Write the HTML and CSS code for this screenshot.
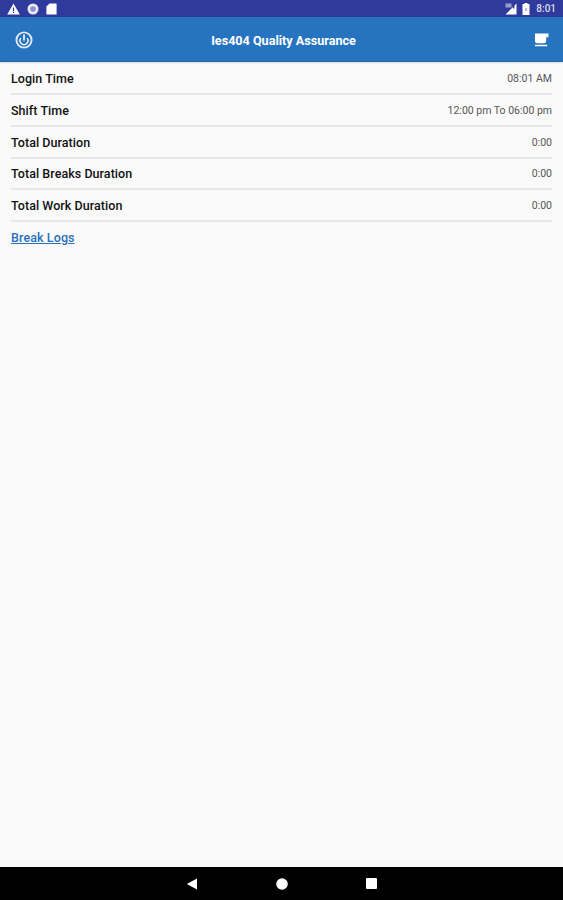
FILE: index.html
```html
<!DOCTYPE html>
<html lang="en">
<head>
    <meta charset="UTF-8">
    <meta name="viewport" content="width=device-width, initial-scale=1.0">
    <title>Ies404 Quality Assurance</title>
    <link rel="stylesheet" href="styles.css">
</head>
<body>
    <div class="status-bar">
        <div class="status-left">
            <svg width="13" height="12" viewBox="0 0 13 12"><path d="M6.5 0.5 L12.8 11.5 H0.2 Z" fill="#fff"/><rect x="5.9" y="4.5" width="1.2" height="3.6" fill="#303a9c"/><rect x="5.9" y="8.8" width="1.2" height="1.2" fill="#303a9c"/></svg>
            <svg width="12" height="12" viewBox="0 0 12 12"><circle cx="6" cy="6" r="5.5" fill="#e8e8f6"/><circle cx="6" cy="6" r="2.8" fill="#8f8fd0"/></svg>
            <svg width="11" height="12" viewBox="0 0 11 12"><path d="M3.5 0.5 H10 a0.6 0.6 0 0 1 0.6 0.6 V11 a0.6 0.6 0 0 1 -0.6 0.6 H1 a0.6 0.6 0 0 1 -0.6 -0.6 V3.5 Z" fill="#fff"/></svg>
        </div>
        <div class="status-right">
            <svg width="12" height="12" viewBox="0 0 12 12"><path d="M11.5 0.5 V11.5 H0.5 Z" fill="#fff"/><rect x="0.5" y="0.5" width="6" height="4" fill="#9a9ccc"/><rect x="8" y="0.5" width="1.4" height="5" fill="#303a9c"/></svg>
            <svg width="8" height="12" viewBox="0 0 8 12"><path d="M2.5 0 H5.5 V1 H7.5 V12 H0.5 V1 H2.5 Z" fill="#fff"/><rect x="3.4" y="5" width="1.2" height="3" fill="#8f8fd0"/></svg>
            <span class="clock">8:01</span>
        </div>
    </div>

    <header class="app-bar">
        <svg class="bar-icon" width="18" height="18" viewBox="0 0 18 18"><circle cx="9" cy="9" r="7.6" fill="none" stroke="#dfe9f6" stroke-width="1.9"/><path d="M5.8 7.2 A4 4 0 1 0 12.2 7.2" fill="none" stroke="#fff" stroke-width="1.4"/><rect x="8.2" y="3.6" width="1.6" height="6" fill="#fff"/></svg>
        <h1>Ies404 Quality Assurance</h1>
        <svg class="bar-icon" width="15" height="14" viewBox="0 0 16 15"><path d="M1 0.5 H15.5 V4.5 H13 V8.5 a2.5 2.5 0 0 1 -2.5 2.5 H3.5 A2.5 2.5 0 0 1 1 8.5 Z" fill="#fff"/><rect x="1" y="12.6" width="13" height="1.6" fill="#fff"/></svg>
    </header>

    <main class="content">
        <div class="row"><span class="label">Login Time</span><span class="value">08:01 AM</span></div>
        <div class="row"><span class="label">Shift Time</span><span class="value">12:00 pm To 06:00 pm</span></div>
        <div class="row"><span class="label">Total Duration</span><span class="value">0:00</span></div>
        <div class="row"><span class="label">Total Breaks Duration</span><span class="value">0:00</span></div>
        <div class="row"><span class="label">Total Work Duration</span><span class="value">0:00</span></div>
        <a class="break-link" href="#">Break Logs</a>
    </main>

    <nav class="nav-bar">
        <svg width="12" height="12" viewBox="0 0 12 12"><path d="M11 0.5 V11.5 L0.8 6 Z" fill="#fff"/></svg>
        <svg width="12" height="12" viewBox="0 0 12 12"><circle cx="6" cy="6" r="5.8" fill="#fff"/></svg>
        <svg width="11" height="11" viewBox="0 0 11 11"><rect width="11" height="11" rx="1" fill="#fff"/></svg>
    </nav>
</body>
</html>
```

FILE: styles.css
```css
html, body {
    height: 100%;
}

body {
    margin: 0;
    display: flex;
    flex-direction: column;
    font-family: Roboto, "Liberation Sans", sans-serif;
    background-color: #fafafa;
}

.status-bar {
    height: 17px;
    padding: 0 7px;
    display: flex;
    align-items: center;
    justify-content: space-between;
    background-color: #303a9c;
    color: #fff;
}

.status-left, .status-right {
    display: flex;
    align-items: center;
}

.status-left {
    gap: 7px;
}

.status-right {
    gap: 5px;
}

.clock {
    font-size: 10px;
    font-weight: 500;
    margin-left: 1px;
    color: #dcdcf0;
}

.app-bar {
    height: 45px;
    padding: 2px 14px 0 15px;
    box-sizing: border-box;
    display: flex;
    align-items: center;
    justify-content: space-between;
    background-color: #2673bf;
    border-bottom: 1px solid #1f66ad;
    box-shadow: 0 1px 2px rgba(0, 0, 0, 0.12);
}

.app-bar h1 {
    margin: 0;
    font-size: 12.6px;
    font-weight: 700;
    color: #fff;
}

.content {
    flex: 1;
    padding: 1.5px 11px 0;
}

.row {
    height: 31.7px;
    box-sizing: border-box;
    padding-top: 1px;
    display: flex;
    align-items: center;
    justify-content: space-between;
    border-bottom: 2px solid #e8e8e8;
}

.label {
    font-size: 12.5px;
    font-weight: 500;
    letter-spacing: 0.05px;
    color: #111;
}

.value {
    font-size: 10.5px;
    color: #555;
}

.break-link {
    display: inline-block;
    margin-top: 8px;
    font-size: 12.5px;
    font-weight: 500;
    letter-spacing: 0.1px;
    color: #2a6fb8;
}

.nav-bar {
    height: 33px;
    padding: 0 186px;
    display: flex;
    align-items: center;
    justify-content: space-between;
    background-color: #000;
}
```
